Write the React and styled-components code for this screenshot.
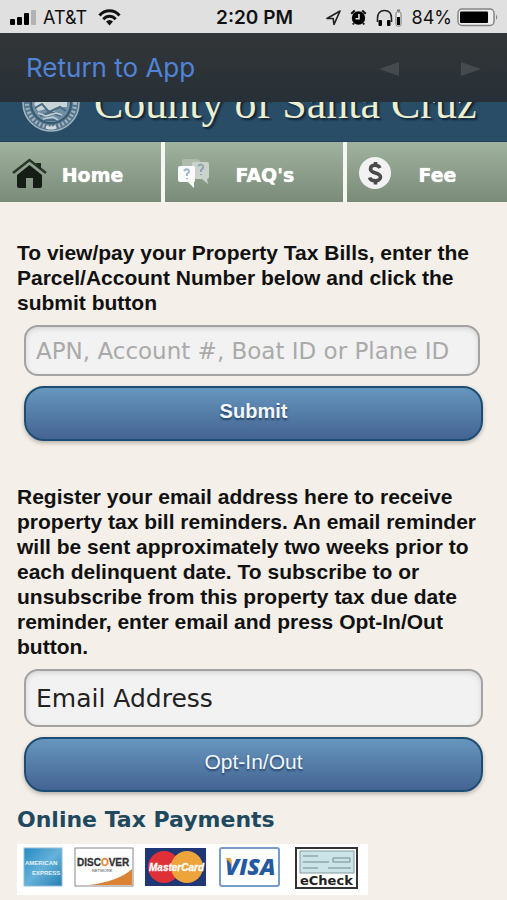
import React from "react";
import styled, { createGlobalStyle } from "styled-components";

const GlobalStyle = createGlobalStyle`
  *, *::before, *::after { box-sizing: border-box; }
  body { margin: 0; background: #f4efe8; }
`;

const Page = styled.div`
  min-height: 100vh;
  background: #f4efe8;
  color: #111;
  font-family: "Liberation Sans", Arial, sans-serif;
  overflow: hidden;
`;

const StatusBar = styled.div`
  display: grid;
  grid-template-columns: 1fr auto 1fr;
  align-items: center;
  height: 33px;
  padding: 2px 8px 0 10px;
  background: #e0e0e0;
  color: #111;
  font: 400 18px/24px Inter, sans-serif;
`;

const StatusGroup = styled.div`
  display: flex;
  align-items: center;
  gap: ${(p) => p.$gap}px;
  justify-content: ${(p) => (p.$end ? "flex-end" : "flex-start")};
  svg { display: block; flex: none; }
`;

const Clock = styled.time`
  font-size: 19px;
  font-weight: 600;
`;

const BrowserBar = styled.div`
  display: flex;
  align-items: center;
  justify-content: space-between;
  height: 69px;
  padding: 0 26px;
  background: linear-gradient(#333638, #273037);
`;

const ReturnLink = styled.a`
  color: #5183d6;
  font: 400 26px/32px Inter, sans-serif;
  text-decoration: none;
`;

const Arrows = styled.div`
  display: flex;
  gap: 62px;
  padding-top: 2px;
`;

const ArrowButton = styled.button`
  display: block;
  padding: 0;
  border: 0;
  background: none;
  svg { display: block; }
`;

const Banner = styled.header`
  display: flex;
  align-items: flex-end;
  gap: 14px;
  height: 40px;
  padding: 0 16px 9px 22px;
  background: #294c67;
  border-bottom: 1px solid #1f4058;
  overflow: hidden;
  svg { display: block; flex: none; }
`;

const CountyName = styled.h1`
  margin: 0;
  padding-bottom: 8px;
  color: #eeeed0;
  font: 400 44px/40px "Liberation Serif", "Times New Roman", serif;
  text-shadow: 2px 2px 2px #10222f;
  white-space: nowrap;
`;

const Nav = styled.nav`
  display: grid;
  grid-template-columns: 161fr 178fr 160fr;
  gap: 4px;
  background: #f6f6f2;
`;

const NavLink = styled.a`
  display: flex;
  align-items: center;
  height: 60px;
  padding: 4px 24px 0 12px;
  background: linear-gradient(#a0b39e, #7a8b7a);
  color: #fff;
  font: 700 19px/24px "DejaVu Sans", Verdana, sans-serif;
  text-decoration: none;
  text-shadow: 0 0 1px #fff;
  svg { display: block; flex: none; }
`;

const NavLabel = styled.span`
  flex: 1;
  padding-top: 2px;
  text-align: center;
`;

const Main = styled.main`
  padding: 38px 24px 5px 17px;
`;

const Form = styled.form`
  display: flex;
  flex-direction: column;
  margin-bottom: ${(p) => p.$after}px;
`;

const FormLabel = styled.label`
  margin-bottom: 10px;
  font-weight: 700;
  font-size: 21px;
  line-height: 25px;
`;

const Field = styled.input`
  height: ${(p) => (p.$tall ? 58 : 51)}px;
  margin: 0 ${(p) => (p.$tall ? 0 : 3)}px 10px 7px;
  padding: 0 10px;
  border: 2px solid #a3a3a3;
  border-radius: 14px;
  background: #f2f2f2;
  box-shadow: inset 0 2px 5px #d5d5d5;
  color: #222;
  font: 400 ${(p) => (p.$tall ? 25 : 23)}px/32px "DejaVu Sans", Verdana, sans-serif;
  outline: none;
  min-width: 0;
  &::placeholder { color: #aaa; opacity: 1; }
`;

const ActionButton = styled.button`
  height: 55px;
  margin-left: 7px;
  padding: 0 0 6px;
  border: 2px solid #1e4d73;
  border-radius: 20px;
  background: linear-gradient(#6696bd, #446493);
  box-shadow: 0 2px 4px #b5b1aa;
  color: #f3f7fb;
  font: ${(p) => (p.$bold ? "700 20px" : "400 21px")}/24px "Liberation Sans", Arial, sans-serif;
  text-shadow: 0 2px 2px #234567;
`;

const PaymentsTitle = styled.h2`
  margin: 0 0 10px;
  color: #20495f;
  font: 700 22px/28px "DejaVu Sans", Verdana, sans-serif;
`;

const CardStrip = styled.div`
  display: inline-flex;
  vertical-align: top;
  padding: 3px 9px 5px 2px;
  background: #fff;
  svg { display: block; }
`;

const SignalIcon = () => (
  <svg width="27" height="17" viewBox="0 0 27 17" aria-hidden="true">
    <rect x="0" y="10" width="5" height="6" rx="1" />
    <rect x="7" y="8" width="5" height="8" rx="1" />
    <rect x="14" y="4" width="5" height="12" rx="1" />
    <rect x="21" y="1" width="5" height="15" rx="1" fill="#b2b2b2" />
  </svg>
);

const WifiIcon = () => (
  <svg width="23" height="17" viewBox="0 0 23 17" fill="none" stroke="#111" strokeWidth="3" aria-hidden="true">
    <path d="M1.5 6.5C7 0.2 16 0.2 21.5 6.5" />
    <path d="M5.3 10.2C9 6.3 14 6.3 17.7 10.2" />
    <path d="M8 12.5Q11.500 9.500 15 12.500L11.500 16.500Z" fill="#111" stroke="none" />
  </svg>
);

const LocationIcon = () => (
  <svg width="15" height="16" viewBox="0 0 15 16" fill="none" stroke="#222" strokeWidth="1.700" strokeLinejoin="round" aria-hidden="true">
    <path d="M14 1L1 8.500H7.200L8 14.500Z" />
  </svg>
);

const AlarmIcon = () => (
  <svg width="17" height="17" viewBox="0 0 17 17" aria-hidden="true">
    <circle cx="8.500" cy="9" r="6.700" />
    <path d="M1.200 4.800L4.800 1.500M12.200 1.500L15.800 4.800M4 14L2.800 15.500M13 14L14.200 15.500" stroke="#111" strokeWidth="2" />
    <path d="M9 5V9.800H5.500" stroke="#e0e0e0" strokeWidth="1.600" fill="none" />
  </svg>
);

const HeadphonesIcon = () => (
  <svg width="27" height="18" viewBox="0 0 27 18" aria-hidden="true">
    <path d="M1.500 13V9.500C1.500 4.500 4 1.500 8.500 1.500S15.500 4.500 15.500 9.500V13" fill="none" stroke="#222" strokeWidth="1.600" />
    <rect x="2.500" y="11" width="3.500" height="6" rx="1" />
    <rect x="11" y="11" width="3.500" height="6" rx="1" />
    <rect x="20" y="3" width="5" height="14" rx="1.500" fill="#eee" stroke="#777" />
    <path d="M21 1.500H24" stroke="#777" strokeWidth="2" />
    <rect x="21" y="8" width="3" height="8" />
  </svg>
);

const BatteryIcon = () => (
  <svg width="42" height="19" viewBox="0 0 42 19" aria-hidden="true">
    <rect x="1" y="1" width="36" height="16.500" rx="4" fill="#eee" stroke="#858585" strokeWidth="1.500" />
    <rect x="3" y="3.500" width="28" height="11.500" rx="1" />
    <path d="M39 6.500Q41.500 9.300 39 12Z" fill="#858585" />
  </svg>
);

const SealIcon = () => (
  <svg width="58" height="58" viewBox="0 0 58 58" fill="none" aria-hidden="true">
    <circle cx="29" cy="29" r="28" fill="#55748c" stroke="#a0b5c2" strokeWidth="1.500" />
    <circle cx="29" cy="29" r="24" stroke="#a0b3be" strokeWidth="4" strokeDasharray="2 2" />
    <circle cx="29" cy="29" r="20" fill="#718ea4" stroke="#355970" strokeWidth="2" />
    <path d="M16 24L27 18L38 25L45 22V33H36L32 38L24 35L16 37L12 30Z" fill="#c9d4d8" />
    <path d="M13 34L20 30L27 38L38 33L44 37M18 42L29 38L39 42M22 46H36" stroke="#486b84" strokeWidth="2" />
    <path d="M16 39L24 42L34 39L40 41M21 45L31 43L36 46" stroke="#c2ced3" strokeWidth="1.500" />
    <path d="M24 53L27 54H31L34 53" stroke="#d3dcdc" strokeWidth="3" />
  </svg>
);

const HomeIcon = () => (
  <svg width="36" height="32" viewBox="0 0 36 32" aria-hidden="true">
    <path d="M5 17L17.500 7L30 17V28Q30 30 28 30H21V20H14V30H7Q5 30 5 28Z" fill="#161c16" />
    <path d="M1 15L17.500 2L34 15" fill="none" stroke="#29352a" strokeWidth="2.500" />
    <path d="M24 5H29V12L24 8Z" fill="#222a22" />
  </svg>
);

const FaqIcon = () => (
  <svg width="34" height="34" viewBox="0 0 34 34" aria-hidden="true">
    <path d="M7 2H20Q23 2 23 5V15H7Q5 15 5 12V4Q5 2 7 2Z" fill="#aebcad" />
    <path d="M17 5H30Q32 5 32 7V20Q32 22 30 22L31 27L25 22H17Q15 22 15 20V7Q15 5 17 5Z" fill="#cbd2cb" />
    <path d="M21 9Q24 6 26 9Q27 11 24 13V15M24 17V18" fill="none" stroke="#92a3b6" strokeWidth="2" />
    <path d="M3 9H16Q18 9 18 11V23Q18 25 17 25V31L11 25H3Q1 25 1 23V11Q1 9 3 9Z" fill="#fafcfc" />
    <path d="M7 14Q9 11 11.500 13Q13 15 10 17V19M10 21V22" fill="none" stroke="#9fb5cf" strokeWidth="2" />
  </svg>
);

const FeeIcon = () => (
  <svg width="33" height="34" viewBox="0 0 33 34" aria-hidden="true">
    <circle cx="16" cy="16" r="16" fill="#f2f2f2" />
    <path d="M21 11C19 7 11.500 7.500 11.500 12C11.500 17 21.500 15 21.500 20C21.500 25 12 25 10.500 20.500" fill="none" stroke="#4a4a4a" strokeWidth="3.600" />
    <path d="M16.500 5V9M16.500 23V27.500" stroke="#4a4a4a" strokeWidth="3.600" />
  </svg>
);

const CardsPicture = () => (
  <svg width="340" height="43" viewBox="0 0 340 43" role="img" aria-label="Accepted payment types">
    <defs>
      <linearGradient id="amex" x2="1" y2="1">
        <stop stopColor="#2589c2" /><stop offset=".5" stopColor="#65b2da" /><stop offset="1" stopColor="#277fb4" />
      </linearGradient>
    </defs>
    <rect x="5" y="1" width="38" height="38" fill="url(#amex)" stroke="#91bdd5" />
    <g fill="#e4f3f9" fontFamily="Liberation Sans, sans-serif" fontWeight="700">
      <text x="6" y="18" fontSize="6">AMERICAN</text>
      <text x="13" y="28" fontSize="6">EXPRESS</text>
    </g>
    <rect x="56" y="1" width="58" height="38" fill="#fff" stroke="#888" />
    <path d="M70 38Q100 34 113 22V38Z" fill="#dc8234" />
    <text x="58" y="19" fontFamily="Liberation Sans, sans-serif" fontSize="10" fontWeight="700" fill="#333" stroke="#333" strokeWidth="0.300">DISC<tspan fill="#e58a3f" stroke="#e58a3f">O</tspan>VER</text>
    <text x="73" y="25" fontFamily="Liberation Sans, sans-serif" fontSize="4" fill="#444">NETWORK</text>
    <rect x="126" y="1" width="61" height="38" fill="#203776" />
    <circle cx="145" cy="20" r="16" fill="#df3038" />
    <circle cx="168" cy="20" r="16" fill="#eda43b" />
    <text x="130" y="24" fontFamily="Liberation Sans, sans-serif" fontSize="10" fontWeight="700" fontStyle="italic" fill="#fff" stroke="#fff" strokeWidth="0.300">MasterCard</text>
    <rect x="201" y="1" width="59" height="38" rx="2" fill="#fff" stroke="#779cc8" strokeWidth="2" />
    <text x="206" y="28" fontFamily="Open Sans, sans-serif" fontSize="23" fontWeight="800" fontStyle="italic" fill="#2459a0">VISA</text>
    <path d="M206 11H212L213 20Q211 14 206 11Z" fill="#eda73f" />
    <rect x="277" y="1" width="61" height="40" fill="#fff" stroke="#333" strokeWidth="2" />
    <rect x="281" y="4" width="54" height="22" fill="#cce4e7" stroke="#829b9f" />
    <path d="M284 9H299M284 15H310M284 21H299M309 21H332M314 11H331V15H314Z" fill="none" stroke="#6d8b8f" />
    <text x="281" y="38" fontFamily="DejaVu Sans, sans-serif" fontSize="13" fontWeight="700" fill="#222">eCheck</text>
  </svg>
);

export default function App() {
  return (
    <Page>
      <GlobalStyle />
      <StatusBar>
        <StatusGroup $gap={6}>
          <SignalIcon />
          <StatusGroup $gap={11}><span>AT&amp;T</span><WifiIcon /></StatusGroup>
        </StatusGroup>
        <Clock>2:20 PM</Clock>
        <StatusGroup $gap={9} $end>
          <LocationIcon /><AlarmIcon /><HeadphonesIcon />
          <StatusGroup $gap={5}><span>84%</span><BatteryIcon /></StatusGroup>
        </StatusGroup>
      </StatusBar>
      <BrowserBar>
        <ReturnLink href="#app">Return to App</ReturnLink>
        <Arrows>
          <ArrowButton type="button" aria-label="Back">
            <svg width="20" height="14" viewBox="0 0 20 14"><path d="M0 7L20 0V14Z" fill="#454a4e" /></svg>
          </ArrowButton>
          <ArrowButton type="button" aria-label="Forward">
            <svg width="20" height="14" viewBox="0 0 20 14"><path d="M20 7L0 0V14Z" fill="#454a4e" /></svg>
          </ArrowButton>
        </Arrows>
      </BrowserBar>
      <Banner>
        <SealIcon />
        <CountyName>County of Santa Cruz</CountyName>
      </Banner>
      <Nav>
        <NavLink href="#home"><HomeIcon /><NavLabel>Home</NavLabel></NavLink>
        <NavLink href="#faqs"><FaqIcon /><NavLabel>FAQ's</NavLabel></NavLink>
        <NavLink href="#fee"><FeeIcon /><NavLabel>Fee</NavLabel></NavLink>
      </Nav>
      <Main>
        <Form $after={43} onSubmit={(e) => e.preventDefault()}>
          <FormLabel htmlFor="parcel">
            To view/pay your Property Tax Bills, enter the Parcel/Account Number below and click the submit button
          </FormLabel>
          <Field id="parcel" placeholder="APN, Account #, Boat ID or Plane ID" />
          <ActionButton $bold>Submit</ActionButton>
        </Form>
        <Form $after={14} onSubmit={(e) => e.preventDefault()}>
          <FormLabel htmlFor="email">
            Register your email address here to receive property tax bill reminders. An email reminder will be sent
            approximately two weeks prior to each delinquent date. To subscribe to or unsubscribe from this property
            tax due date reminder, enter email and press Opt-In/Out button.
          </FormLabel>
          <Field id="email" $tall defaultValue="Email Address" />
          <ActionButton>Opt-In/Out</ActionButton>
        </Form>
        <PaymentsTitle>Online Tax Payments</PaymentsTitle>
        <CardStrip><CardsPicture /></CardStrip>
      </Main>
    </Page>
  );
}
